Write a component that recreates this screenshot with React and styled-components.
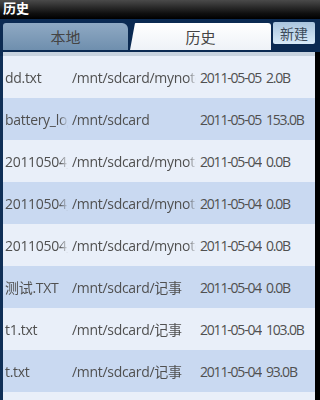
import React from "react";
import styled, { createGlobalStyle } from "styled-components";

const GlobalStyle = createGlobalStyle`
  html, body {
    margin: 0;
    padding: 0;
    background: #000;
  }
  body {
    font-family: "Open Sans", "Noto Sans", "Noto Sans CJK SC", sans-serif;
  }
`;

const files = [
  { name: "dd.txt", path: "/mnt/sdcard/mynotes", date: "2011-05-05", size: "2.0B" },
  { name: "battery_log.txt", path: "/mnt/sdcard", date: "2011-05-05", size: "153.0B" },
  { name: "20110504_1.txt", path: "/mnt/sdcard/mynotes", date: "2011-05-04", size: "0.0B" },
  { name: "20110504_2.txt", path: "/mnt/sdcard/mynotes", date: "2011-05-04", size: "0.0B" },
  { name: "20110504_3.txt", path: "/mnt/sdcard/mynotes", date: "2011-05-04", size: "0.0B" },
  { name: "测试.TXT", path: "/mnt/sdcard/记事", date: "2011-05-04", size: "0.0B" },
  { name: "t1.txt", path: "/mnt/sdcard/记事", date: "2011-05-04", size: "103.0B" },
  { name: "t.txt", path: "/mnt/sdcard/记事", date: "2011-05-04", size: "93.0B" },
  { name: "", path: "", date: "", size: "" },
];

export default function App() {
  return (
    <Screen>
      <GlobalStyle />
      <TitleBar>历史</TitleBar>
      <TabBar>
        <Tab>本地</Tab>
        <Tab active>历史</Tab>
        <NewButton>新建</NewButton>
      </TabBar>
      <TabStrip />
      <List>
        {files.map((f, i) => (
          <Row key={i} alt={i % 2 === 1}>
            <Cell width="63px" fade>{f.name}</Cell>
            <Cell width="124px" fade>{f.path}</Cell>
            <Cell width="62px" narrow>{f.date}</Cell>
            <Cell width="50px" narrow>{f.size}</Cell>
          </Row>
        ))}
      </List>
    </Screen>
  );
}

const Screen = styled.div`
  width: 320px;
  height: 400px;
  overflow: hidden;
  background: #000;
  display: flex;
  flex-direction: column;
`;

const TitleBar = styled.div`
  height: 19px;
  flex-shrink: 0;
  padding-left: 3px;
  background: linear-gradient(#4a4a4a, #101010 70%, #000);
  color: #fff;
  font-size: 13px;
  font-weight: bold;
  line-height: 17px;
`;

const TabBar = styled.div`
  height: 30px;
  flex-shrink: 0;
  display: flex;
  align-items: flex-start;
  padding: 3px 5px 0 3px;
  gap: 2px;
  background: #0b2a52;
`;

const Tab = styled.div`
  width: ${(p) => (p.active ? "141px" : "125px")};
  height: 27px;
  margin-top: 1px;
  display: flex;
  align-items: center;
  justify-content: center;
  font-size: 15px;
  color: #444;
  border-radius: ${(p) => (p.active ? "6px 3px 0 0" : "3px 6px 0 0")};
  background: ${(p) =>
    p.active
      ? "linear-gradient(#ffffff, #eef2f7)"
      : "linear-gradient(#8fa9c3, #6f8fae)"};
  clip-path: ${(p) =>
    p.active ? "polygon(5px 0, 100% 0, 100% 100%, 0 100%)" : "none"};
`;

const NewButton = styled.div`
  width: 42px;
  height: 22px;
  display: flex;
  align-items: center;
  justify-content: center;
  font-size: 14px;
  color: #3c4a5a;
  border-radius: 2px;
  background: linear-gradient(#a9c4de, #d8eaf8);
`;

const TabStrip = styled.div`
  height: 4px;
  flex-shrink: 0;
  margin-right: 5px;
  background: #c8d3df;
  border-left: 3px solid #0b2a52;
`;

const List = styled.div`
  flex: 1;
  margin-right: 5px;
  border-left: 3px solid #0f2f57;
  background: #e8eef8;
`;

const Row = styled.div`
  height: 42px;
  display: flex;
  align-items: center;
  padding-left: 2px;
  gap: 4px;
  background: ${(p) => (p.alt ? "#c9d9f1" : "#e9eff9")};
  font-size: 14px;
  color: #505050;
`;

const Cell = styled.div`
  width: ${(p) => p.width};
  flex-shrink: 0;
  white-space: nowrap;
  overflow: hidden;
  letter-spacing: ${(p) => (p.narrow ? "-1.2px" : "-0.3px")};
  ${(p) =>
    p.fade &&
    `-webkit-mask-image: linear-gradient(90deg, #000 calc(100% - 8px), transparent);
     mask-image: linear-gradient(90deg, #000 calc(100% - 8px), transparent);`}
`;
